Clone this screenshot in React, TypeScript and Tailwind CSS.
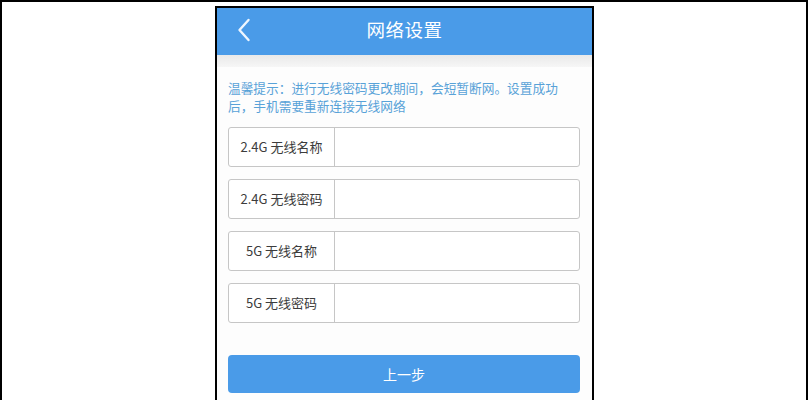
import React from "react";

const fields = ["2.4G 无线名称", "2.4G 无线密码", "5G 无线名称", "5G 无线密码"];

export default function App() {
  return (
    <div
      className="w-[808px] h-[400px] overflow-hidden bg-white border-l-2 border-t-2 border-r-2 border-black pl-[213px] pt-[4px]"
      style={{ fontFamily: '"Noto Sans CJK SC", "Noto Sans", sans-serif' }}
    >
      <div className="w-[379px] h-[400px] border-2 border-b-0 border-black bg-[#fdfdfd] flex flex-col">
        {/* header */}
        <div className="relative h-[47px] bg-[#4a9be8] flex items-center justify-center pb-[4px] shrink-0">
          <svg
            className="absolute left-[20px] top-[10px]"
            width="14"
            height="24"
            viewBox="0 0 14 24"
            fill="none"
          >
            <path
              d="M11.5 2L2.5 12L11.5 22"
              stroke="#eef6ff"
              strokeWidth="2.4"
              strokeLinecap="round"
              strokeLinejoin="round"
            />
          </svg>
          <span className="text-[18.5px] text-white tracking-[0.5px]">网络设置</span>
        </div>
        <div className="h-[12px] bg-gradient-to-b from-[#e9e9e9] to-[#f6f6f6] shrink-0" />

        <div className="pl-[11px] pr-[12px] pt-[12px]">
          <p className="text-[12.7px] leading-[18px] text-[#58a2d8]">
            温馨提示：进行无线密码更改期间，会短暂断网。设置成功
            <br />
            后，手机需要重新连接无线网络
          </p>

          <div className="mt-[12px] flex flex-col gap-[12px]">
            {fields.map((f) => (
              <div
                key={f}
                className="h-[40px] flex border border-[#c6c6c6] rounded-[3px] bg-white"
              >
                <div className="w-[106px] border-r border-[#c6c6c6] flex items-center justify-center text-[13px] text-[#3c3c3c]">
                  {f}
                </div>
                <div className="flex-1" />
              </div>
            ))}
          </div>

          <button className="mt-[32px] w-full h-[38px] rounded-[4px] bg-[#4a9be8] text-white text-[14px]">
            上一步
          </button>
        </div>
      </div>
    </div>
  );
}
